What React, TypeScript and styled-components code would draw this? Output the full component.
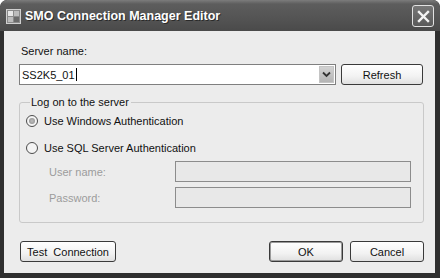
import { createGlobalStyle, styled } from "styled-components";

const GlobalStyle = createGlobalStyle`
  html, body {
    margin: 0;
    padding: 0;
    background: #ffffff;
  }
  body {
    font-family: "Liberation Sans", Arial, sans-serif;
    font-size: 11px;
    color: #111;
  }
`;

const App = () => {
  return (
    <>
      <GlobalStyle />
      <Window>
        <TitleBar>
          <AppIcon viewBox="0 0 15 15">
            <rect x="0.5" y="0.5" width="14" height="14" fill="#8a8a8a" stroke="#d0d0d0" />
            <rect x="2" y="2" width="5" height="5" fill="#e6e6e6" />
            <rect x="8" y="2" width="5" height="5" fill="#bcbcbc" />
            <rect x="2" y="8" width="5" height="5" fill="#bcbcbc" />
            <rect x="8" y="8" width="5" height="5" fill="#6a6a6a" />
          </AppIcon>
          <Title>SMO Connection Manager Editor</Title>
          <CloseButton>
            <svg width="13" height="13" viewBox="0 0 13 13">
              <path d="M2 2 L11 11 M11 2 L2 11" stroke="#f4f4f4" strokeWidth="2.4" strokeLinecap="square" />
            </svg>
          </CloseButton>
        </TitleBar>

        <Client>
          <FieldLabel>Server name:</FieldLabel>
          <ServerRow>
            <Combo>
              <ComboText>
                SS2K5_01<Caret />
              </ComboText>
              <ComboArrow>
                <svg width="9" height="7" viewBox="0 0 9 7">
                  <path d="M1 1.5 L4.5 5 L8 1.5" fill="none" stroke="#333" strokeWidth="1.8" />
                </svg>
              </ComboArrow>
            </Combo>
            <Button $width={82}>Refresh</Button>
          </ServerRow>

          <Group>
            <Legend>Log on to the server</Legend>
            <RadioRow $after={13}>
              <Radio $checked />
              <span>Use Windows Authentication</span>
            </RadioRow>
            <RadioRow $after={6}>
              <Radio />
              <span>Use SQL Server Authentication</span>
            </RadioRow>
            <CredRow>
              <DimLabel>User name:</DimLabel>
              <DisabledInput />
            </CredRow>
            <CredRow>
              <DimLabel>Password:</DimLabel>
              <DisabledInput />
            </CredRow>
          </Group>

          <Footer>
            <Button $width={96}>Test&nbsp; Connection</Button>
            <Spacer />
            <Button $width={74} $default>OK</Button>
            <Button $width={74}>Cancel</Button>
          </Footer>
        </Client>
      </Window>
    </>
  );
};

export default App;

const Window = styled.div`
  width: 440px;
  height: 278px;
  box-sizing: border-box;
  background: #2f2f2f;
  border-radius: 7px 7px 0 0;
  padding: 0 5px 5px 4px;
  display: flex;
  flex-direction: column;
  overflow: hidden;
`;

const TitleBar = styled.div`
  height: 31px;
  flex-shrink: 0;
  margin: 0 -5px 0 -4px;
  padding: 0 6px 0 6px;
  display: flex;
  align-items: center;
  background: linear-gradient(#7c7c7c 0px, #5d5d5d 4px, #545454 18px, #4a4a4a 31px);
  border-radius: 7px 7px 0 0;
`;

const AppIcon = styled.svg`
  width: 15px;
  height: 15px;
  margin-right: 4px;
  margin-top: 1px;
`;

const Title = styled.div`
  flex: 1;
  color: #ffffff;
  font-family: "Liberation Sans", Arial, sans-serif;
  font-weight: bold;
  font-size: 12.5px;
  text-shadow: 1px 1px 0 #2a2a2a;
`;

const CloseButton = styled.div`
  width: 20px;
  height: 20px;
  border: 1px solid #e2e2e2;
  border-radius: 3px;
  background: linear-gradient(#777, #5a5a5a);
  display: flex;
  align-items: center;
  justify-content: center;
  margin-top: 1px;
`;

const Client = styled.div`
  flex: 1;
  background: #ececec;
  padding: 13px 11px 0 15px;
  display: flex;
  flex-direction: column;
`;

const FieldLabel = styled.div`
  margin-left: 2px;
  line-height: 14px;
`;

const ServerRow = styled.div`
  display: flex;
  gap: 5px;
  margin-top: 6px;
  height: 21px;
`;

const Combo = styled.div`
  width: 317px;
  box-sizing: border-box;
  border: 1px solid #7f7f7f;
  background: #ffffff;
  display: flex;
  align-items: center;
  padding: 1px;
`;

const ComboText = styled.div`
  flex: 1;
  padding-left: 1px;
  display: flex;
  align-items: center;
`;

const Caret = styled.span`
  display: inline-block;
  width: 1px;
  height: 13px;
  background: #000;
  margin-left: 1px;
`;

const ComboArrow = styled.div`
  width: 15px;
  height: 17px;
  background: linear-gradient(#d2d2d2, #b4b4b4);
  border: 1px solid #c4c4c4;
  box-sizing: border-box;
  display: flex;
  align-items: center;
  justify-content: center;
`;

const Button = styled.div<{ $width: number; $default?: boolean }>`
  width: ${({ $width }) => $width}px;
  height: 21px;
  box-sizing: border-box;
  border: 1px solid #3a3a3a;
  box-shadow: ${({ $default }) => ($default ? "inset 0 0 0 1px #9a9a9a" : "none")};
  border-radius: 3px;
  background: linear-gradient(#ffffff, #f2f2f2 60%, #e0e0e0);
  display: flex;
  align-items: center;
  justify-content: center;
  font-size: 11px;
  color: #111;
  flex-shrink: 0;
`;

const Group = styled.fieldset`
  margin: 11px 0 0 0;
  padding: 6px 0 0 6px;
  height: 127px;
  box-sizing: border-box;
  border: 1px solid #c9c9c9;
  border-radius: 3px;
  min-width: 0;
`;

const Legend = styled.legend`
  padding: 0 2px 0 1px;
  margin-left: 4px;
  line-height: 12px;
`;

const RadioRow = styled.div<{ $after: number }>`
  display: flex;
  align-items: center;
  gap: 6px;
  height: 14px;
  margin-bottom: ${({ $after }) => $after}px;
`;

const Radio = styled.span<{ $checked?: boolean }>`
  width: 12px;
  height: 12px;
  box-sizing: border-box;
  border-radius: 50%;
  border: 1px solid #4c4c4c;
  background: #f4f4f4;
  position: relative;
  &::after {
    content: "";
    display: ${({ $checked }) => ($checked ? "block" : "none")};
    position: absolute;
    left: 2px;
    top: 2px;
    width: 6px;
    height: 6px;
    border-radius: 50%;
    background: radial-gradient(#bdbdbd, #8a8a8a);
  }
`;

const CredRow = styled.div`
  display: flex;
  align-items: center;
  height: 21px;
  margin-bottom: 5px;
`;

const DimLabel = styled.div`
  width: 149px;
  padding-left: 23px;
  box-sizing: border-box;
  color: #9c9c9c;
`;

const DisabledInput = styled.div`
  width: 236px;
  height: 21px;
  box-sizing: border-box;
  border: 1px solid #8c8c8c;
  background: #e8e8e8;
`;

const Footer = styled.div`
  display: flex;
  gap: 7px;
  margin-top: 18px;
  padding-left: 1px;
`;

const Spacer = styled.div`
  flex: 1;
`;
